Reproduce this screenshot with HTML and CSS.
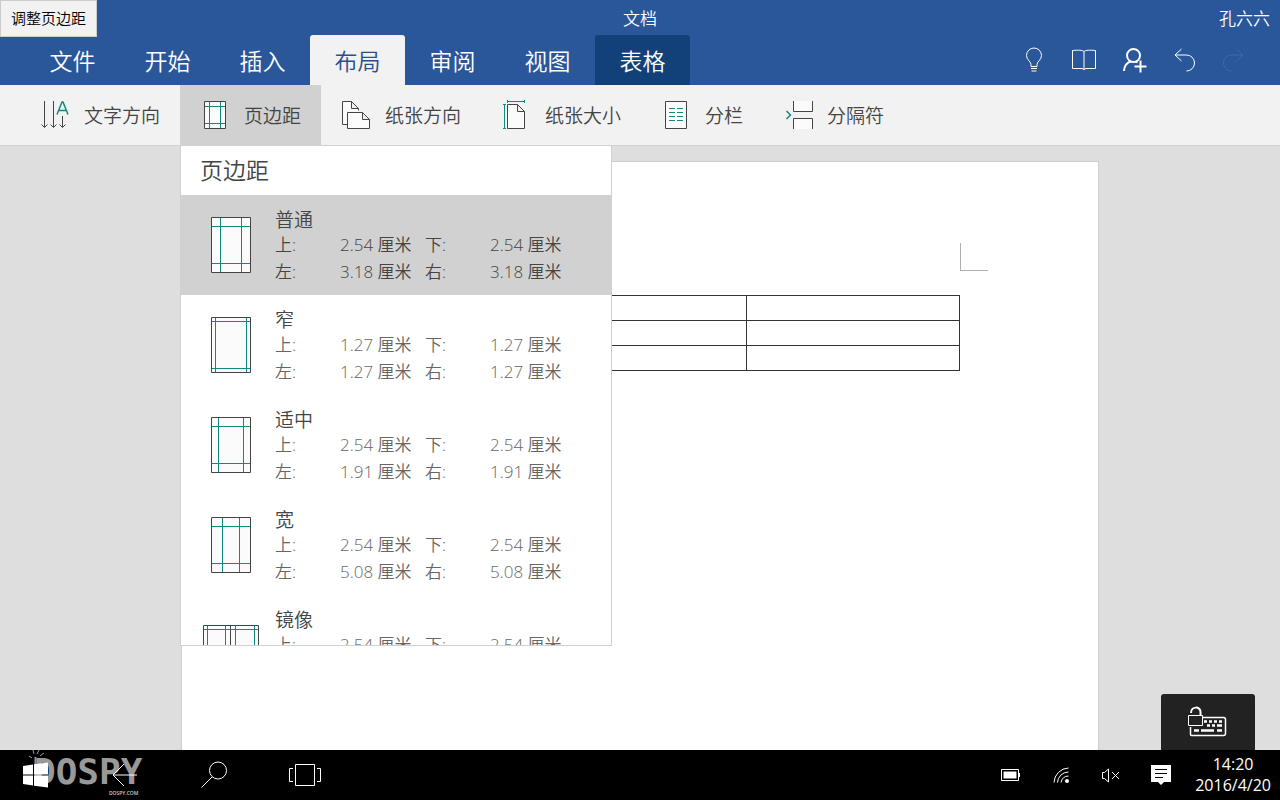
FILE: index.html
```html
<!DOCTYPE html>
<html lang="zh-CN">
<head>
  <meta charset="UTF-8">
  <meta name="viewport" content="width=device-width, initial-scale=1">
  <title>文档</title>
  <link rel="stylesheet" href="styles.css">
</head>
<body>
  <header class="header">
    <div class="titlebar">
      <span></span>
      <h1 class="doc-title">文档</h1>
      <span class="user">孔六六</span>
    </div>
    <div class="tab-row">
      <nav class="tabs">
        <button class="tab">文件</button>
        <button class="tab">开始</button>
        <button class="tab">插入</button>
        <button class="tab active">布局</button>
        <button class="tab">审阅</button>
        <button class="tab">视图</button>
        <button class="tab context">表格</button>
      </nav>
      <div class="actions">
        <button class="action" aria-label="告诉我">
          <svg width="28" height="28" viewBox="0 0 28 28"><path d="M11 19.500v-2C11 14.500 6.500 13 6.500 8.500a7.500 7.500 0 0 1 15 0C21.500 13 17 14.500 17 17.500v2zM11 21.500h6M11.500 24h5" transform="translate(0 1)"/></svg>
        </button>
        <button class="action" aria-label="阅读">
          <svg width="28" height="28" viewBox="0 0 28 28"><path d="M14 5.500C12 4 9 4 2.500 4.500v18H12l2 1 2-1h9.500v-18C19 4 16 4 14 5.500zM14 5.500v18"/></svg>
        </button>
        <button class="action" aria-label="共享">
          <svg class="bold" width="28" height="28" viewBox="0 0 28 28"><circle cx="13.500" cy="9.500" r="6.500"/><path d="M4 25c0-5 3-9 7.500-9.500M15.500 15.500l2 .8M20.500 14.500v12M14.500 20.500h12"/></svg>
        </button>
        <button class="action" aria-label="撤消">
          <svg width="28" height="28" viewBox="0 0 28 28"><path d="M11.500 3L5 9l6.500 6M5 9h11.500a8 8 0 0 1 0 16"/></svg>
        </button>
        <button class="action" aria-label="恢复" disabled>
          <svg width="28" height="28" viewBox="0 0 28 28"><path d="M16.500 3L23 9l-6.500 6M23 9H11.500a8 8 0 0 0 0 16"/></svg>
        </button>
      </div>
    </div>
    <div class="tooltip" role="tooltip">调整页边距</div>
  </header>

  <div class="ribbon">
    <button class="tool">
      <svg width="28" height="30" viewBox="0 0 28 30"><path d="M4.500 1v26M1.500 24.500l3 3 3-3M13.500 1v26M10.500 24.500l3 3 3-3M22.500 16v11M19.500 24.500l3 3 3-3"/><path class="teal medium" d="M17 14.500L22 2h1l5 12.500M18.500 10.500h8"/></svg>
      <span>文字方向</span>
    </button>
    <div class="dropdown">
      <button class="tool open" aria-expanded="true">
        <svg width="28" height="30" viewBox="0 0 28 30"><path class="paper" d="M4.500 1.500h21v27h-21z"/><path class="teal" d="M9.500 2v26M20.500 2v26M5 6.500h20M5 23.500h20"/></svg>
        <span>页边距</span>
      </button>
      <div class="menu">
        <h2 class="menu-title">页边距</h2>
        <button class="option selected">
          <svg width="40" height="56" viewBox="0 0 40 56"><path class="paper" d="M.5.5h39v55H.5z"/><path class="teal" d="M9.500 1v54M30.500 1v54M1 9.500h38M1 46.500h38"/></svg>
          <span class="option-text">
            <span class="name">普通</span>
            <span class="values">
              <span>上:</span><span>2.54 厘米</span><span>下:</span><span>2.54 厘米</span>
              <span>左:</span><span>3.18 厘米</span><span>右:</span><span>3.18 厘米</span>
            </span>
          </span>
        </button>
        <button class="option">
          <svg width="40" height="56" viewBox="0 0 40 56"><path class="paper" d="M.5.5h39v55H.5z"/><path class="teal" d="M4.500 1v54M35.500 1v54M1 4.500h38M1 51.500h38"/></svg>
          <span class="option-text">
            <span class="name">窄</span>
            <span class="values">
              <span>上:</span><span>1.27 厘米</span><span>下:</span><span>1.27 厘米</span>
              <span>左:</span><span>1.27 厘米</span><span>右:</span><span>1.27 厘米</span>
            </span>
          </span>
        </button>
        <button class="option">
          <svg width="40" height="56" viewBox="0 0 40 56"><path class="paper" d="M.5.5h39v55H.5z"/><path class="teal" d="M7.500 1v54M32.500 1v54M1 9.500h38M1 46.500h38"/></svg>
          <span class="option-text">
            <span class="name">适中</span>
            <span class="values">
              <span>上:</span><span>2.54 厘米</span><span>下:</span><span>2.54 厘米</span>
              <span>左:</span><span>1.91 厘米</span><span>右:</span><span>1.91 厘米</span>
            </span>
          </span>
        </button>
        <button class="option">
          <svg width="40" height="56" viewBox="0 0 40 56"><path class="paper" d="M.5.5h39v55H.5z"/><path class="teal" d="M11.500 1v54M28.500 1v54M1 9.500h38M1 46.500h38"/></svg>
          <span class="option-text">
            <span class="name">宽</span>
            <span class="values">
              <span>上:</span><span>2.54 厘米</span><span>下:</span><span>2.54 厘米</span>
              <span>左:</span><span>5.08 厘米</span><span>右:</span><span>5.08 厘米</span>
            </span>
          </span>
        </button>
        <button class="option">
          <svg width="56" height="40" viewBox="0 0 56 40"><path class="paper" d="M.5.5h55v39H.5zM27.500 1v38"/><path class="teal" d="M4.500 1v38M22.500 1v38M32.500 1v38M51.500 1v38M1 4.500h54M1 35.500h54"/></svg>
          <span class="option-text">
            <span class="name">镜像</span>
            <span class="values">
              <span>上:</span><span>2.54 厘米</span><span>下:</span><span>2.54 厘米</span>
            </span>
          </span>
        </button>
      </div>
    </div>
    <button class="tool">
      <svg width="28" height="30" viewBox="0 0 28 30"><path class="paper" d="M7 24.500H1.500v-23h9l7 7v2M10.500 1.500v7h7"/><path class="paper" d="M6.500 12.500h15l7 7v9h-22zM21.500 12.500v7h7"/></svg>
      <span>纸张方向</span>
    </button>
    <button class="tool">
      <svg width="28" height="30" viewBox="0 0 28 30"><path class="paper" d="M6.500 4.500h10l7 7v17h-17zM16.500 4.500v7h7"/><path class="teal" d="M6.500 0v3M23.500 0v3M6.500 1.500h17M2 4.500h3M2 28.500h3M3.500 4.500v24"/></svg>
      <span>纸张大小</span>
    </button>
    <button class="tool">
      <svg width="28" height="30" viewBox="0 0 28 30"><path class="paper" d="M4.500 1.500h21v27h-21z"/><path class="teal" d="M8 8.500h6M16 8.500h6M8 12.500h6M16 12.500h6M8 16.500h6M16 16.500h6M8 20.500h6M16 20.500h6"/></svg>
      <span>分栏</span>
    </button>
    <button class="tool">
      <svg width="28" height="30" viewBox="0 0 28 30"><path class="paper" d="M10.500 1v10.500h19V1M10.500 29V18.500h19V29"/><path class="teal medium" d="M3.500 11l4 4-4 4"/></svg>
      <span>分隔符</span>
    </button>
  </div>

  <main class="workspace">
    <article class="page">
      <div class="crop-row"><i class="crop left"></i><i class="crop right"></i></div>
      <table class="doc-table">
        <tr><td></td><td></td><td></td></tr>
        <tr><td></td><td></td><td></td></tr>
        <tr><td></td><td></td><td></td></tr>
      </table>
    </article>
    <button class="keyboard" aria-label="触摸键盘">
      <svg width="40" height="32" viewBox="0 0 40 32"><path d="M3 7C3 0 12.500 0 12.500 6v3" stroke-width="2"/><path d="M15 11.500h20.500a2 2 0 0 1 2 2v14a2 2 0 0 1-2 2h-32a1 1 0 0 1-1-1V21" stroke-width="1.500"/><path d="M.5 9.500h14v10H.5z"/><path d="M16 15.500h3M21 15.500h3M26 15.500h3M31 15.500h3M19 19.500h3M24 19.500h3M29 19.500h5M6 24.500h5M13 24.500h13M29 24.500h5" stroke-width="2.500"/></svg>
    </button>
  </main>

  <footer class="taskbar">
    <div class="task-buttons">
      <button aria-label="开始">
        <svg width="32" height="32" viewBox="0 0 32 32"><path class="solid" d="M4 7l10-1.500v10H4zM15 5.300L29 3.500v12H15zM4 16.500h10v10L4 25zM15 16.500h14v12L15 26.700z"/></svg>
      </button>
      <button aria-label="返回">
        <svg width="32" height="32" viewBox="0 0 32 32"><path d="M15 5L4 16l11 11M4 16h24"/></svg>
      </button>
      <button aria-label="搜索">
        <svg width="32" height="32" viewBox="0 0 32 32"><circle cx="19" cy="11.500" r="8.500"/><path d="M13 18L2.500 28.500"/></svg>
      </button>
      <button aria-label="任务视图">
        <svg width="32" height="32" viewBox="0 0 32 32"><path d="M6.500 5.500h19v21h-19zM4 9.500H.5v13H4M28 9.500h3.500v13H28"/></svg>
      </button>
    </div>
    <div class="tray">
      <svg width="20" height="24" viewBox="0 0 20 24"><path d="M.5 6.500h17v11H.5zM18.500 10v4"/><path class="solid" d="M2.500 8.500h13v7h-13z"/></svg>
      <svg width="20" height="24" viewBox="0 0 20 24"><path d="M3 19.500A15 15 0 0 1 17.500 5M6.500 19.500A11 11 0 0 1 17.500 9M10 19.500A8 8 0 0 1 17.500 13"/><circle class="solid" cx="16" cy="18" r="2"/></svg>
      <svg width="20" height="24" viewBox="0 0 20 24"><path d="M1.500 9.500h2l4-3.500v13l-4-3.500h-2zM11 9l7 7M18 9l-7 7"/></svg>
      <svg width="20" height="24" viewBox="0 0 20 24"><path class="solid" d="M0 2h20v17h-7l-3 3-3-3H0z"/><path class="ink" d="M4 6.500h12M4 10.500h12M4 14.500h8"/></svg>
      <div class="clock"><time>14:20</time><span>2016/4/20</span></div>
    </div>
    <div class="watermark">
      <svg width="16" height="28" viewBox="0 0 16 28"><path d="M7.500 8v20" stroke-width="2"/><path d="M1 7l3 2M5 1l1 4M11 1L9 5M16 4l-4 3"/></svg>
      <strong>DOSPY</strong>
      <small>DOSPY.COM</small>
    </div>
  </footer>
</body>
</html>
```

FILE: styles.css
```css
* {
  box-sizing: border-box;
}

body {
  margin: 0;
  height: 100vh;
  display: flex;
  flex-direction: column;
  overflow: hidden;
  font-family: "Open Sans", "Noto Sans CJK SC", sans-serif;
  font-size: 17px;
  font-weight: 350;
  color: #444;
}

button {
  margin: 0;
  padding: 0;
  border: none;
  background: none;
  font: inherit;
  color: inherit;
  cursor: pointer;
}

svg {
  display: block;
  flex: none;
  overflow: visible;
  fill: none;
  stroke: currentColor;
}

.header {
  position: relative;
  background: #2a579a;
  color: #fff;
}

.titlebar {
  display: grid;
  grid-template-columns: 1fr auto 1fr;
  align-items: center;
  height: 35px;
  padding: 0 10px;
}

.doc-title {
  margin: 0;
  font-size: 17px;
  font-weight: 350;
}

.user {
  text-align: right;
}

.tab-row {
  display: flex;
  justify-content: space-between;
  padding: 0 21px 0 25px;
}

.tabs,
.actions {
  display: flex;
}

.tab {
  width: 95px;
  height: 50px;
  font-size: 23px;
  border-radius: 3px 3px 0 0;
}

.tab.active {
  background: #f2f2f2;
  color: #2a4f8c;
}

.tab.context {
  background: #124078;
}

.action {
  width: 50px;
  height: 50px;
  display: flex;
  align-items: center;
  justify-content: center;
}

.action:disabled {
  color: #3f68a8;
}

.action .bold {
  stroke-width: 2;
}

.tooltip {
  position: absolute;
  top: 0;
  left: 0;
  padding: 0 10px;
  border: 1px solid #ccc;
  background: #f2f2f2;
  color: #000;
  font-size: 15px;
  line-height: 35px;
}

.ribbon {
  display: flex;
  padding-left: 20px;
  background: #f2f2f2;
  border-bottom: 1px solid #d0d0d0;
}

.tool {
  display: flex;
  align-items: center;
  gap: 16px;
  height: 60px;
  padding: 0 20px;
  font-size: 19px;
}

.tool.open {
  background: #d1d1d1;
}

.paper {
  fill: #fbfbfb;
}

.teal {
  stroke: #0f8a80;
}

.medium {
  stroke-width: 1.5;
}

.dropdown {
  position: relative;
}

.menu {
  position: absolute;
  top: 100%;
  left: 0;
  z-index: 2;
  width: 432px;
  height: 501px;
  overflow: hidden;
  background: #fff;
  border: 1px solid #d0d0d0;
}

.menu-title {
  margin: 0;
  padding-left: 19px;
  font-size: 23px;
  font-weight: 350;
  line-height: 49px;
}

.option {
  display: grid;
  grid-template-columns: 56px 1fr;
  align-items: center;
  justify-items: center;
  gap: 16px;
  width: 100%;
  height: 100px;
  padding-left: 22px;
  text-align: left;
}

.option.selected {
  background: #d1d1d1;
}

.option-text {
  justify-self: start;
  align-self: start;
  padding-top: 14px;
}

.name {
  display: block;
  font-size: 19px;
  line-height: 22px;
}

.values {
  display: grid;
  grid-template-columns: 65px 85px 65px 85px;
  line-height: 27px;
  color: #666;
}

.selected .values {
  color: #444;
}

.workspace {
  position: relative;
  flex: 1;
  min-height: 0;
  padding: 15px 181px 0;
  background: #dedede;
}

.page {
  height: 100%;
  padding: 81px 110px 0;
  background: #fff;
  border: 1px solid #d0d0d0;
  border-bottom: none;
}

.crop-row {
  display: flex;
  justify-content: space-between;
}

.crop {
  width: 28px;
  height: 28px;
  border-bottom: 1px solid #b0b0b0;
}

.crop.left {
  border-right: 1px solid #b0b0b0;
}

.crop.right {
  border-left: 1px solid #b0b0b0;
}

.doc-table {
  width: calc(100% - 56px);
  margin: 24px 28px 0;
  border-collapse: collapse;
  table-layout: fixed;
}

.doc-table td {
  height: 25px;
  padding: 0;
  border: 1px solid #333;
}

.keyboard {
  position: absolute;
  right: 25px;
  bottom: 0;
  display: flex;
  align-items: center;
  justify-content: center;
  width: 94px;
  height: 56px;
  background: #222;
  color: #fff;
  border-radius: 3px 3px 0 0;
}

.taskbar {
  position: relative;
  display: flex;
  align-items: center;
  justify-content: space-between;
  height: 50px;
  padding: 0 9px 0 19px;
  background: #000;
  color: #fff;
}

.task-buttons {
  display: flex;
  gap: 58px;
}

.task-buttons button {
  position: relative;
  z-index: 1;
}

.solid {
  fill: currentColor;
  stroke: none;
}

.ink {
  stroke: #000;
}

.tray {
  display: flex;
  align-items: center;
  gap: 30px;
}

.clock {
  display: flex;
  flex-direction: column;
  align-items: center;
  margin-left: -6px;
  font-size: 16px;
  font-weight: 400;
  line-height: 21px;
}

.watermark {
  position: absolute;
  left: 34px;
  bottom: 3px;
  display: grid;
  color: #999;
}

.watermark svg {
  position: absolute;
  left: -6px;
  bottom: 20px;
}

.watermark strong {
  font-family: "DejaVu Sans Mono", monospace;
  font-size: 36px;
  font-weight: 700;
  line-height: 34px;
}

.watermark small {
  justify-self: end;
  padding-right: 4px;
  font-size: 5px;
  font-weight: 600;
  line-height: 8px;
  color: #ccc;
}
```
